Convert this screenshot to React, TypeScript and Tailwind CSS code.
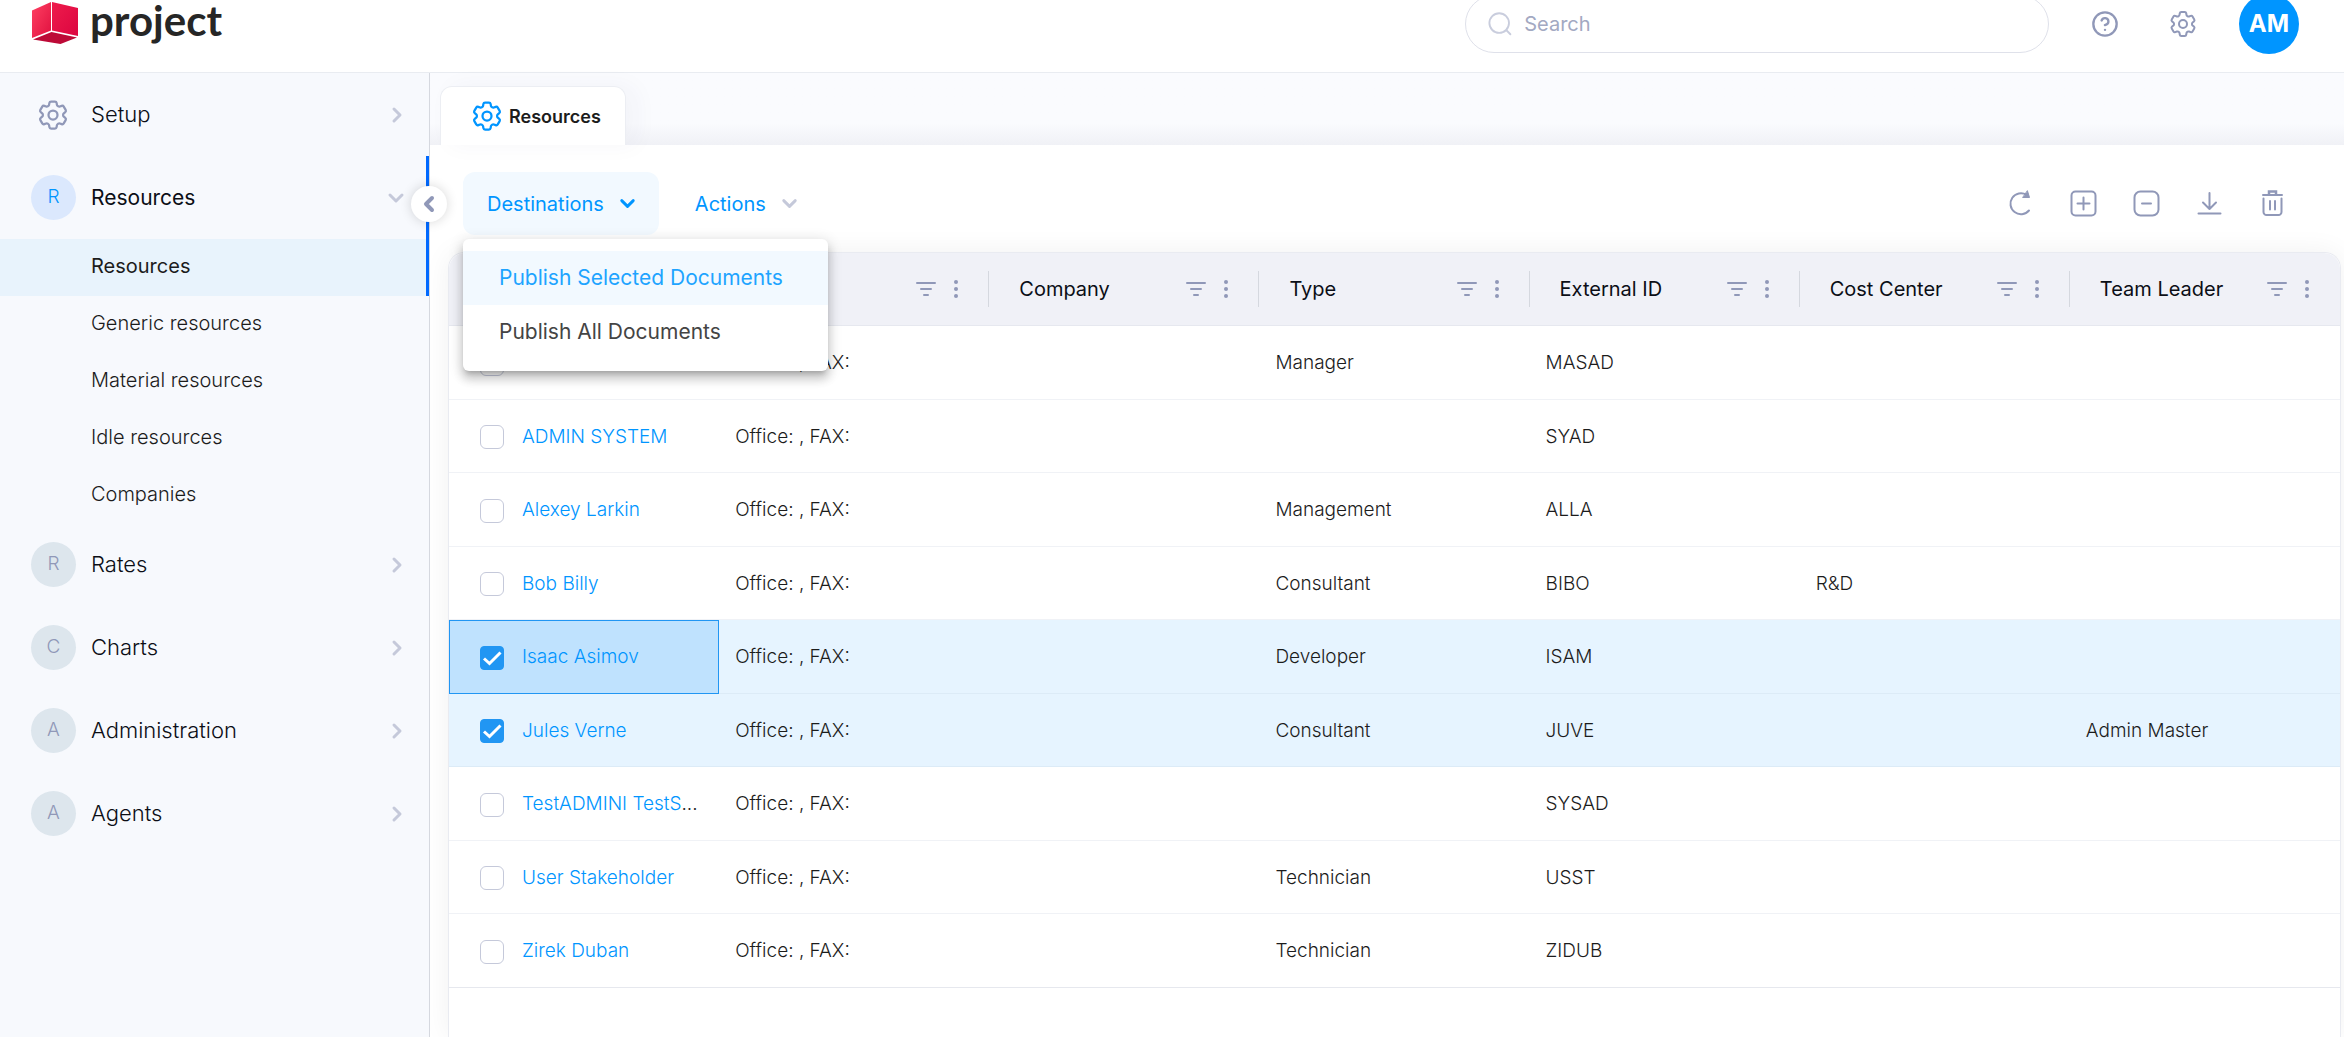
import { useState } from "react";
import { ChevronDown, ChevronLeft, ChevronRight, CircleHelp } from "lucide-react";
import { HiOutlineCog6Tooth } from "react-icons/hi2";

const menuGroups = [
  { letter: 'R', label: 'Rates' },
  { letter: 'C', label: 'Charts' },
  { letter: 'A', label: 'Administration' },
  { letter: 'A', label: 'Agents' },
];

const subItems = ['Resources', 'Generic resources', 'Material resources', 'Idle resources', 'Companies'];

const columns = ['', '', 'Company', 'Type', 'External ID', 'Cost Center', 'Team Leader'];

const resources = [
  { name: '', type: 'Manager', externalId: 'MASAD', costCenter: '', leader: '' },
  { name: 'ADMIN SYSTEM', type: '', externalId: 'SYAD', costCenter: '', leader: '' },
  { name: 'Alexey Larkin', type: 'Management', externalId: 'ALLA', costCenter: '', leader: '' },
  { name: 'Bob Billy', type: 'Consultant', externalId: 'BIBO', costCenter: 'R&D', leader: '' },
  { name: 'Isaac Asimov', type: 'Developer', externalId: 'ISAM', costCenter: '', leader: '' },
  { name: 'Jules Verne', type: 'Consultant', externalId: 'JUVE', costCenter: '', leader: 'Admin Master' },
  { name: 'TestADMINI TestS', cut: true, type: '', externalId: 'SYSAD', costCenter: '', leader: '' },
  { name: 'User Stakeholder', type: 'Technician', externalId: 'USST', costCenter: '', leader: '' },
  { name: 'Zirek Duban', type: 'Technician', externalId: 'ZIDUB', costCenter: '', leader: '' },
];

function Logo() {
  return (
    <svg width="46" height="44" viewBox="0 0 46 44">
      <defs>
        <linearGradient id="left" x1="0" y1="0" x2="1" y2="1">
          <stop offset="0" stopColor="#ff4163" />
          <stop offset="1" stopColor="#e0103f" />
        </linearGradient>
        <linearGradient id="right" x1="0" y1="0" x2="1" y2="1">
          <stop offset="0" stopColor="#ee1c4c" />
          <stop offset="1" stopColor="#dc0540" />
        </linearGradient>
      </defs>
      <path d="M0 8.500 19 0v28.500L0 36Z" fill="url(#left)" />
      <path d="M20 0 46 6v28L20 28.500Z" fill="url(#right)" />
      <path d="M1 37.500 19.500 30 45 35.500 28.500 42Z" fill="#bd0a37" />
    </svg>
  );
}

function SearchIcon() {
  return (
    <svg width="26" height="26" viewBox="0 0 26 26" fill="none" stroke="#c9cddd" strokeWidth="2" strokeLinecap="round">
      <circle cx="12" cy="12" r="10.500" />
      <path d="m20 20 4 4" />
    </svg>
  );
}

function FilterIcon() {
  return (
    <svg width="20" height="16" viewBox="0 0 20 16" stroke="#9098b8" strokeWidth="2" strokeLinecap="round">
      <path d="M1 2h18M5 8h10M8 14h4" />
    </svg>
  );
}

function DotsIcon() {
  return (
    <svg width="4" height="18" viewBox="0 0 4 18" fill="#9098b8">
      <circle cx="2" cy="2" r="2" />
      <circle cx="2" cy="9" r="2" />
      <circle cx="2" cy="16" r="2" />
    </svg>
  );
}

function ToolIcon({ name }: { name: string }) {
  return (
    <svg width="27" height="27" viewBox="0 0 27 27" fill="none" stroke="#9098b8" strokeWidth="2" strokeLinecap="round" strokeLinejoin="round">
      {name === 'Refresh' && (
        <>
          <path d="M22 20.500A10.500 10.500 0 1 1 19.500 4.800" />
          <path d="M20.500 1 22.500 7.500H16Z" fill="#9098b8" strokeWidth="1" />
        </>
      )}
      {name === 'Add' && (
        <>
          <rect x="1.500" y="1.500" width="24" height="24" rx="4" />
          <path d="M13.500 7.500v12M7.500 13.500h12" />
        </>
      )}
      {name === 'Remove' && (
        <>
          <rect x="1.500" y="1.500" width="24" height="24" rx="6" />
          <path d="M9 13.500h9" />
        </>
      )}
      {name === 'Download' && <path d="M13.500 3v16M7 12.500l6.500 6.500 6.500-6.500M2.500 23.500h22" />}
      {name === 'Delete' && (
        <>
          <path d="M4.500 8.500V22a3 3 0 0 0 3 3h12a3 3 0 0 0 3-3V8.500M4 5h19" />
          <path d="M10 4V1.500h7V4" strokeWidth="2.500" strokeLinejoin="miter" />
          <path d="M11 11v8.500M16 11v8.500" />
        </>
      )}
    </svg>
  );
}

export default function App() {
  const [menuOpen, setMenuOpen] = useState(true);
  const [selected, setSelected] = useState<number[]>([4, 5]);

  const toggle = (index: number) =>
    setSelected(selected.includes(index) ? selected.filter((i) => i !== index) : [...selected, index]);

  return (
    <div className="flex min-h-screen flex-col overflow-hidden bg-white font-['Inter',sans-serif] text-[#1c1c1c]">
      <header className="-mt-6 flex h-[97px] items-center border-b border-[#e9ecf1] pl-8 pr-[45px]">
        <div className="flex items-center gap-3">
          <Logo />
          <span className="-mt-2 font-['Lato',sans-serif] text-[42px] font-bold leading-10 text-[#262626]">project</span>
        </div>
        <div className="ml-auto flex items-center">
          <label className="flex h-[58px] w-[584px] items-center gap-3 rounded-full border border-[#dfe1ea] px-[22px]">
            <SearchIcon />
            <input type="text" aria-label="Search" placeholder="Search" className="w-full text-[20px] outline-none placeholder:text-[#a3a9c2]" />
          </label>
          <button aria-label="Help" className="ml-[42px] text-[#9098b8]">
            <CircleHelp size={28} strokeWidth={2} />
          </button>
          <button aria-label="Settings" className="ml-12 text-[#9098b8]">
            <HiOutlineCog6Tooth size={32} />
          </button>
          <button className="ml-10 h-[60px] w-[60px] rounded-full bg-[#0095ff] text-[24px] font-bold text-white">AM</button>
        </div>
      </header>

      <div className="flex flex-1">
        <aside className="relative w-[430px] shrink-0 border-r border-[#d5d8df] bg-[#f7f9fd] text-[21px]">
          <nav>
            <button className="flex h-[83px] w-full items-center pl-[35px] pr-5 text-[22px] font-light text-[#0b0e16]">
              <HiOutlineCog6Tooth size={36} className="text-[#9098b8]" />
              <span className="ml-5">Setup</span>
              <ChevronRight size={24} strokeWidth={3} className="ml-auto text-[#c5c9da]" />
            </button>

            <div className="border-r-3 border-[#0069ff]">
              <button className="flex h-[83px] w-full items-center pl-[31px] pr-[18px] font-normal text-[#0b0e16]">
                <span className="flex h-[45px] w-[45px] items-center justify-center rounded-full bg-[#dbe8fd] text-[19px] font-light text-[#0095ff]">R</span>
                <span className="ml-[15px]">Resources</span>
                <ChevronDown size={24} strokeWidth={3} className="ml-auto text-[#c5c9da]" />
              </button>
              <ul className="-mb-px text-[20px] font-light">
                {subItems.map((item, i) => (
                  <li key={item}>
                    <a href="#" className={i === 0 ? 'flex h-[57px] items-center bg-[#e8f3fc] pl-[91px] pb-1 font-normal' : 'flex h-[57px] items-center bg-[#f7f9fd] -mr-[3px] pl-[91px] pb-1'}>
                      {item}
                    </a>
                  </li>
                ))}
              </ul>
            </div>

            {menuGroups.map((group) => (
              <button key={group.label} className="flex h-[83px] w-full items-center pl-[31px] pr-5 text-[22px] font-light text-[#0b0e16]">
                <span className="flex h-[45px] w-[45px] items-center justify-center rounded-full bg-[#dde6ed] text-[19px] text-[#9098b8]">{group.letter}</span>
                <span className="ml-[15px]">{group.label}</span>
                <ChevronRight size={24} strokeWidth={3} className="ml-auto text-[#c5c9da]" />
              </button>
            ))}
          </nav>
          <button aria-label="Collapse menu" className="absolute -right-[18px] top-[113px] z-10 flex h-9 w-9 items-center justify-center rounded-full bg-white text-[#9098b8] shadow-[0_0_12px_rgba(0,0,0,0.16)]">
            <ChevronLeft size={24} strokeWidth={4} />
          </button>
        </aside>

        <main className="flex min-w-0 flex-1 flex-col">
          <div className="flex bg-linear-to-b from-[#fafbfe] from-70% to-[#f0f1f6] pl-[10px] pt-[13px]">
            <button className="flex h-[59px] items-center gap-1 rounded-t-xl border border-b-0 border-[#eceef3] bg-white pl-7 pr-6 text-[18px] font-semibold shadow-[10px_0_24px_rgba(40,50,90,0.04)]">
              <HiOutlineCog6Tooth size={36} className="text-[#0095ff]" />
              Resources
            </button>
          </div>

          <div className="flex items-center pb-[17px] pl-[33px] pr-[58px] pt-[27px]">
            <div className="relative">
              <button
                onClick={() => setMenuOpen(!menuOpen)}
                className="flex h-[63px] items-center gap-3 rounded-xl bg-[#f2f9ff] pl-6 pr-5 text-[20px] text-[#0095ff]"
              >
                Destinations
                <ChevronDown size={23} strokeWidth={3} />
              </button>
              {menuOpen && (
                <div className="absolute left-0 top-full z-20 mt-1 w-[365px] rounded-md bg-white py-3 text-[21px] shadow-[0_5px_5px_-3px_rgba(0,0,0,0.2),0_8px_10px_1px_rgba(0,0,0,0.14),0_3px_14px_2px_rgba(0,0,0,0.12)]">
                  <button className="flex h-[54px] w-full items-center bg-[#f2f9ff] pl-9 text-[#1ea4ff]">Publish Selected Documents</button>
                  <button className="flex h-[54px] w-full items-center pl-9 text-[#444]">Publish All Documents</button>
                </div>
              )}
            </div>
            <button className="ml-9 flex items-center gap-3 text-[20px] text-[#0095ff]">
              Actions
              <ChevronDown size={23} strokeWidth={3} className="text-[#c5c9da]" />
            </button>
            <div className="ml-auto flex gap-9">
              {['Refresh', 'Add', 'Remove', 'Download', 'Delete'].map((name) => (
                <button key={name} aria-label={name}>
                  <ToolIcon name={name} />
                </button>
              ))}
            </div>
          </div>

          <div className="ml-[18px] mr-[3px] flex-1 rounded-t-2xl border border-b-0 border-[#e9ebf1] shadow-[0_0_28px_rgba(0,0,0,0.06)]">
            <table className="w-full table-fixed border-separate border-spacing-0 text-left text-[20px]">
              <thead>
                <tr className="h-[73px]">
                  {columns.map((column, i) => (
                    <th key={i} className="border-b border-[#e6e8ef] bg-[#f0f1f7] p-0 font-normal text-[#0b0e16] first:rounded-tl-2xl last:rounded-tr-2xl">
                      <div className={i === columns.length - 1 ? 'flex h-9 items-center pl-[30px] pr-[31px]' : 'flex h-9 items-center border-r border-[#d5d8df] pl-[30px] pr-[30px]'}>
                        {column}
                        <button aria-label="Filter" className="ml-auto"><FilterIcon /></button>
                        <button aria-label="Column menu" className="ml-[18px]"><DotsIcon /></button>
                      </div>
                    </th>
                  ))}
                </tr>
              </thead>
              <tbody className="text-[19px] font-light">
                {resources.map((row, i) => {
                  const checked = selected.includes(i);
                  return (
                    <tr
                      key={i}
                      className={`h-[73px] odd:h-[74px] *:border-b *:p-0 *:pl-4 *:pt-0.5 ${checked ? 'bg-[#e6f4ff] *:border-[#dcebf7]' : '*:border-[#f0f2f6] last:*:border-[#e6e8ee]'}`}
                    >
                      <td className={i === 4 ? 'bg-[#bfe2fe] outline outline-1 -outline-offset-1 outline-[#2196f3]' : ''}>
                        <div className="flex items-center pl-[15px]">
                          <label className="grid">
                            <input
                              type="checkbox"
                              aria-label={row.name || 'Select row'}
                              checked={checked}
                              onChange={() => toggle(i)}
                              className="col-start-1 row-start-1 h-6 w-6 appearance-none rounded-md border border-[#c5c9da] bg-white checked:rounded checked:border-[#2196f3] checked:bg-[#2196f3]"
                            />
                            {checked && (
                              <svg viewBox="0 0 24 24" className="pointer-events-none col-start-1 row-start-1 h-6 w-6" fill="none" stroke="#fff" strokeWidth="3">
                                <path d="m4 12.500 5.500 5L20.500 6.500" />
                              </svg>
                            )}
                          </label>
                          <a href="#" className="ml-[18px] whitespace-nowrap text-[#0095ff]">{row.name}</a>
                          {row.cut && '...'}
                        </div>
                      </td>
                      <td>Office: , FAX:</td>
                      <td></td>
                      <td>{row.type}</td>
                      <td>{row.externalId}</td>
                      <td>{row.costCenter}</td>
                      <td>{row.leader}</td>
                    </tr>
                  );
                })}
              </tbody>
            </table>
          </div>
        </main>
      </div>
    </div>
  );
}
